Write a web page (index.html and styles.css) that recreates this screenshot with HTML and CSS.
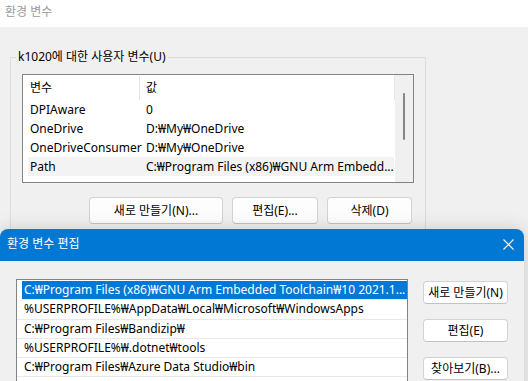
FILE: index.html
```html
<!DOCTYPE html>
<html lang="ko">
<head>
<meta charset="utf-8">
<title>환경 변수</title>
<link rel="stylesheet" href="styles.css">
</head>
<body>
<div class="win">
  <div class="titlebar">환경 변수</div>
  <div class="win-body">
    <fieldset class="group">
      <legend>k1020에 대한 사용자 변수(U)</legend>
      <div class="lv">
        <div class="lv-main">
          <div class="lv-head">
            <div class="hc hc1">변수</div>
            <div class="hc hc2">값</div>
          </div>
          <div class="lv-row"><div class="k">DPIAware</div><div class="v">0</div></div>
          <div class="lv-row"><div class="k">OneDrive</div><div class="v">D:₩My₩OneDrive</div></div>
          <div class="lv-row"><div class="k">OneDriveConsumer</div><div class="v">D:₩My₩OneDrive</div></div>
          <div class="lv-row hot"><div class="k">Path</div><div class="v">C:₩Program Files (x86)₩GNU Arm Embedd...</div></div>
        </div>
        <div class="lv-scroll"><div class="thumb"></div></div>
      </div>
      <div class="btns">
        <button class="btn w134">새로 만들기(N)...</button>
        <button class="btn w86">편집(E)...</button>
        <button class="btn w85">삭제(D)</button>
      </div>
    </fieldset>
  </div>
</div>

<div class="dialog">
  <div class="dlg-title">
    <span>환경 변수 편집</span>
    <svg class="close" width="11" height="11" viewBox="0 0 11 11"><path d="M0.5 0.5L10.5 10.5M10.5 0.5L0.5 10.5" stroke="#fff" stroke-width="1.1" fill="none"/></svg>
  </div>
  <div class="dlg-body">
    <div class="listbox">
      <div class="lb-row sel">C:₩Program Files (x86)₩GNU Arm Embedded Toolchain₩10 2021.1...</div>
      <div class="lb-row">%USERPROFILE%₩AppData₩Local₩Microsoft₩WindowsApps</div>
      <div class="lb-row">C:₩Program Files₩Bandizip₩</div>
      <div class="lb-row">%USERPROFILE%₩.dotnet₩tools</div>
      <div class="lb-row">C:₩Program Files₩Azure Data Studio₩bin</div>
      <div class="lb-row"></div>
    </div>
    <div class="dlg-btns">
      <button class="btn sm">새로 만들기(N)</button>
      <button class="btn sm">편집(E)</button>
      <button class="btn sm">찾아보기(B)...</button>
    </div>
  </div>
</div>
</body>
</html>
```

FILE: styles.css
```css
html, body {
  margin: 0;
  padding: 0;
}
body {
  width: 528px;
  height: 381px;
  overflow: hidden;
  position: relative;
  background: #f0f0f0;
  color: #000;
  font-family: "Noto Sans", "Noto Sans CJK KR", sans-serif;
  font-size: 12px;
  line-height: 16px;
}

.titlebar {
  height: 27px;
  box-sizing: border-box;
  background: #fff;
  padding: 0 0 3px 5px;
  display: flex;
  align-items: center;
  color: #9b9b9b;
}

.win-body {
  padding: 22px 0 0 10px;
}

.group {
  margin: 0;
  width: 416px;
  min-inline-size: 0;
  box-sizing: border-box;
  border: 1px solid #dcdcdc;
  padding: 9px 11px 30px 11px;
}
.group legend {
  padding: 0 2px;
  margin-left: -6px;
  line-height: 16px;
}

.lv {
  display: flex;
  height: 109px;
  box-sizing: border-box;
  border: 1px solid #838383;
  background: #fff;
}
.lv-main {
  width: 372px;
  overflow: hidden;
}
.lv-head {
  display: flex;
  height: 25px;
}
.hc {
  box-sizing: border-box;
  display: flex;
  align-items: center;
  border-right: 1px solid #e5e5e5;
  margin-top: 1px;
}
.hc1 {
  width: 117px;
  padding-left: 7px;
}
.hc2 {
  width: 255px;
  padding-left: 6px;
}
.lv-row {
  display: flex;
  height: 19px;
  margin-left: 5px;
  width: 366px;
  align-items: center;
  white-space: nowrap;
}
.lv-row.hot {
  background: #f3f3f3;
}
.lv-row .k {
  width: 116px;
  padding-left: 2px;
}
.lv-row .v {
  flex: 1;
  overflow: hidden;
}
.lv-scroll {
  flex: 1;
  background: #f0f0f0;
  padding: 18px 0 0 8px;
}
.thumb {
  width: 2px;
  height: 47px;
  border-radius: 1px;
  background: #868686;
}

.btns {
  display: flex;
  justify-content: flex-end;
  gap: 9px;
  margin-top: 14px;
  padding-right: 2px;
}
.btn {
  font: inherit;
  color: #000;
  margin: 0;
  padding: 0;
  height: 27px;
  box-sizing: border-box;
  border: 1px solid #d3d3d3;
  border-bottom-color: #c2c2c2;
  border-radius: 4px;
  background: #fdfdfd;
  display: flex;
  align-items: center;
  justify-content: center;
  white-space: nowrap;
}
.w134 { width: 134px; }
.w86 { width: 86px; }
.w85 { width: 85px; }

.dialog {
  position: absolute;
  left: 0;
  top: 229px;
  width: 524px;
  height: 170px;
  background: #f0f0f0;
  border-radius: 8px 8px 0 0;
  box-shadow: 0 0 18px rgba(0, 0, 0, 0.16);
  overflow: hidden;
}
.dlg-title {
  height: 32px;
  box-sizing: border-box;
  background: #0078d4;
  color: #fff;
  display: flex;
  align-items: center;
  justify-content: space-between;
  padding: 0 10px 2px 7px;
}
.close {
  display: block;
}
.dlg-body {
  display: flex;
  gap: 15px;
  padding: 18px 0 0 16px;
}
.listbox {
  width: 392px;
  height: 140px;
  box-sizing: border-box;
  border: 1px solid #838383;
  background: #fff;
  padding-top: 1px;
}
.lb-row {
  height: 19.25px;
  box-sizing: border-box;
  border-bottom: 1px solid #e8e8e8;
  padding-left: 7px;
  line-height: 18px;
  white-space: nowrap;
  overflow: hidden;
}
.lb-row.sel {
  margin-left: 5px;
  padding-left: 2px;
  background: #0078d7;
  color: #fff;
}
.dlg-btns {
  display: flex;
  flex-direction: column;
  gap: 15px;
  padding-top: 2px;
}
.btn.sm {
  width: 85px;
  height: 23px;
  background: #fff;
}
```
